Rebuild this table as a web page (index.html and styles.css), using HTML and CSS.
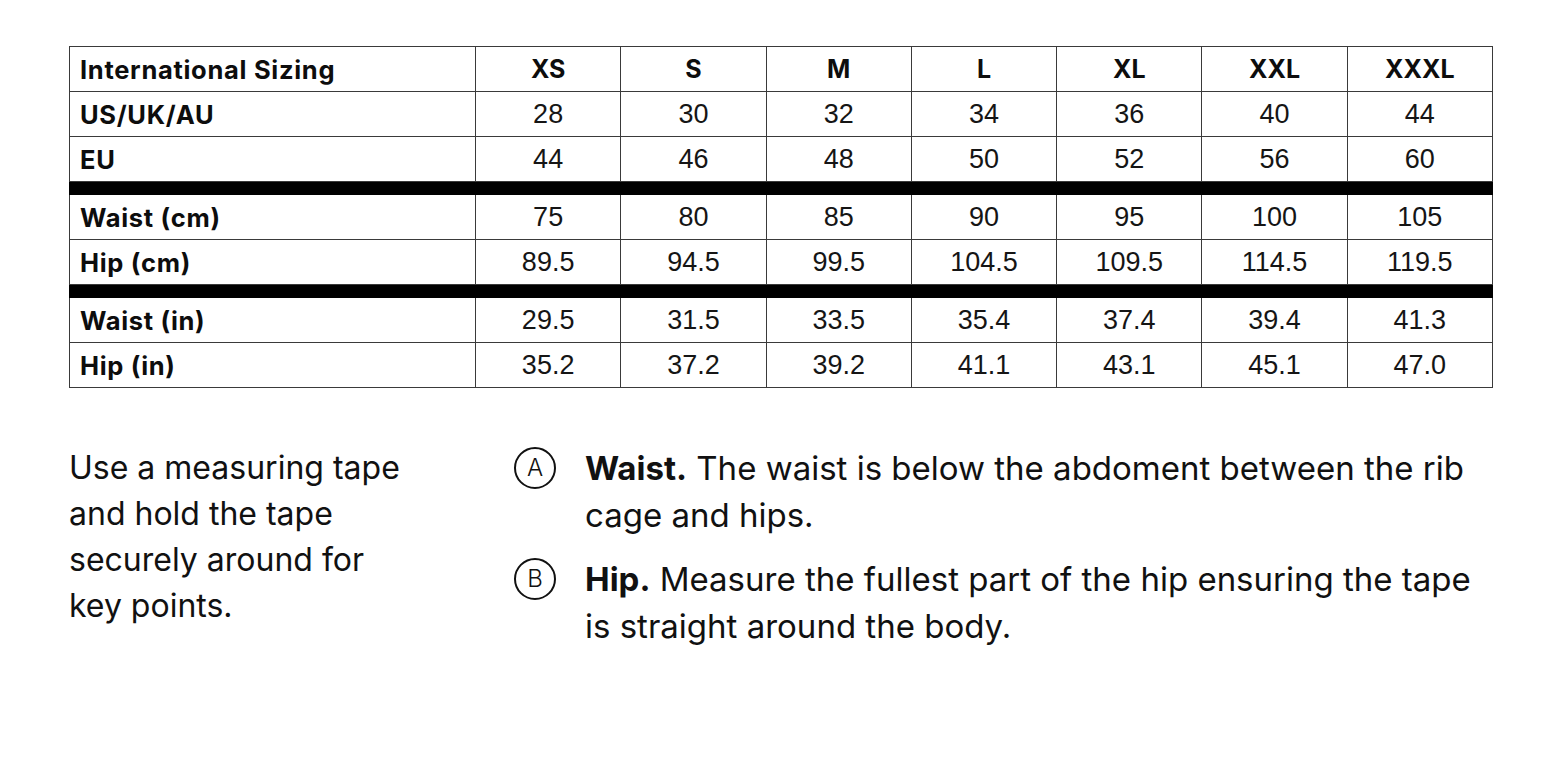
FILE: index.html
```html
<!DOCTYPE html>
<html lang="en">
<head>
<meta charset="utf-8">
<title>Size Guide</title>
<link rel="stylesheet" href="styles.css">
</head>
<body>
<main class="page">
  <table class="sizes">
    <colgroup>
      <col class="col-label">
      <col><col><col><col><col><col><col>
    </colgroup>
    <tbody>
      <tr class="head">
        <th>International Sizing</th>
        <td>XS</td><td>S</td><td>M</td><td>L</td><td>XL</td><td>XXL</td><td>XXXL</td>
      </tr>
      <tr>
        <th>US/UK/AU</th>
        <td>28</td><td>30</td><td>32</td><td>34</td><td>36</td><td>40</td><td>44</td>
      </tr>
      <tr>
        <th>EU</th>
        <td>44</td><td>46</td><td>48</td><td>50</td><td>52</td><td>56</td><td>60</td>
      </tr>
      <tr class="sep"><td colspan="8"></td></tr>
      <tr>
        <th>Waist (cm)</th>
        <td>75</td><td>80</td><td>85</td><td>90</td><td>95</td><td>100</td><td>105</td>
      </tr>
      <tr>
        <th>Hip (cm)</th>
        <td>89.5</td><td>94.5</td><td>99.5</td><td>104.5</td><td>109.5</td><td>114.5</td><td>119.5</td>
      </tr>
      <tr class="sep"><td colspan="8"></td></tr>
      <tr>
        <th>Waist (in)</th>
        <td>29.5</td><td>31.5</td><td>33.5</td><td>35.4</td><td>37.4</td><td>39.4</td><td>41.3</td>
      </tr>
      <tr>
        <th>Hip (in)</th>
        <td>35.2</td><td>37.2</td><td>39.2</td><td>41.1</td><td>43.1</td><td>45.1</td><td>47.0</td>
      </tr>
    </tbody>
  </table>

  <section class="notes">
    <div class="intro-col">
      <p class="intro">Use a measuring tape and hold the tape securely around for key points.</p>
    </div>
    <div class="points">
      <div class="point">
        <span class="badge">A</span>
        <p class="point-text"><strong>Waist.</strong> The waist is below the abdoment between the rib cage and hips.</p>
      </div>
      <div class="point">
        <span class="badge">B</span>
        <p class="point-text"><strong>Hip.</strong> Measure the fullest part of the hip ensuring the tape is straight around the body.</p>
      </div>
    </div>
  </section>
</main>
</body>
</html>
```

FILE: styles.css
```css
html, body {
  margin: 0;
  padding: 0;
  background: #ffffff;
}

body {
  font-family: Inter, "Liberation Sans", Arial, sans-serif;
  color: #111111;
}

.page {
  padding: 46px 0 0 69px;
}

.sizes {
  width: 1424px;
  border-collapse: collapse;
  table-layout: fixed;
}

.col-label {
  width: 406px;
}

.sizes th,
.sizes td {
  border: 1px solid #3a3a3a;
  height: 45px;
  padding: 0;
  box-sizing: border-box;
}

.sizes th {
  text-align: left;
  padding-left: 10px;
  font-family: Inter, "Liberation Sans", Arial, sans-serif;
  font-weight: 700;
  font-size: 25.5px;
  letter-spacing: 0.7px;
  color: #0d0d0d;
}

.sizes td {
  text-align: center;
  font-family: "Liberation Sans", Arial, sans-serif;
  font-size: 27px;
  color: #151515;
}

.sizes .head th,
.sizes .head td {
  height: 45px;
}

.sizes .head td {
  font-family: Inter, "Liberation Sans", Arial, sans-serif;
  font-weight: 700;
  font-size: 25px;
  color: #0d0d0d;
}

.sizes .sep td {
  height: 13px;
  background: #000000;
  border-color: #000000;
}

.notes {
  display: flex;
  margin-top: 57px;
}

.intro-col {
  flex: none;
  width: 445px;
}

.intro {
  margin: 0;
  width: 342px;
  font-size: 32px;
  line-height: 46px;
}

.points {
  display: flex;
  flex-direction: column;
  gap: 17px;
}

.point {
  display: flex;
  align-items: flex-start;
  gap: 29px;
}

.badge {
  flex: none;
  width: 42px;
  height: 42px;
  margin-top: 2px;
  border: 2px solid #111111;
  border-radius: 50%;
  box-sizing: border-box;
  display: flex;
  align-items: center;
  justify-content: center;
  font-size: 24px;
  font-weight: 300;
  line-height: 1;
}

.point-text {
  margin: 0;
  width: 900px;
  font-size: 33px;
  line-height: 47px;
}

.point-text strong {
  font-weight: 700;
}
```
